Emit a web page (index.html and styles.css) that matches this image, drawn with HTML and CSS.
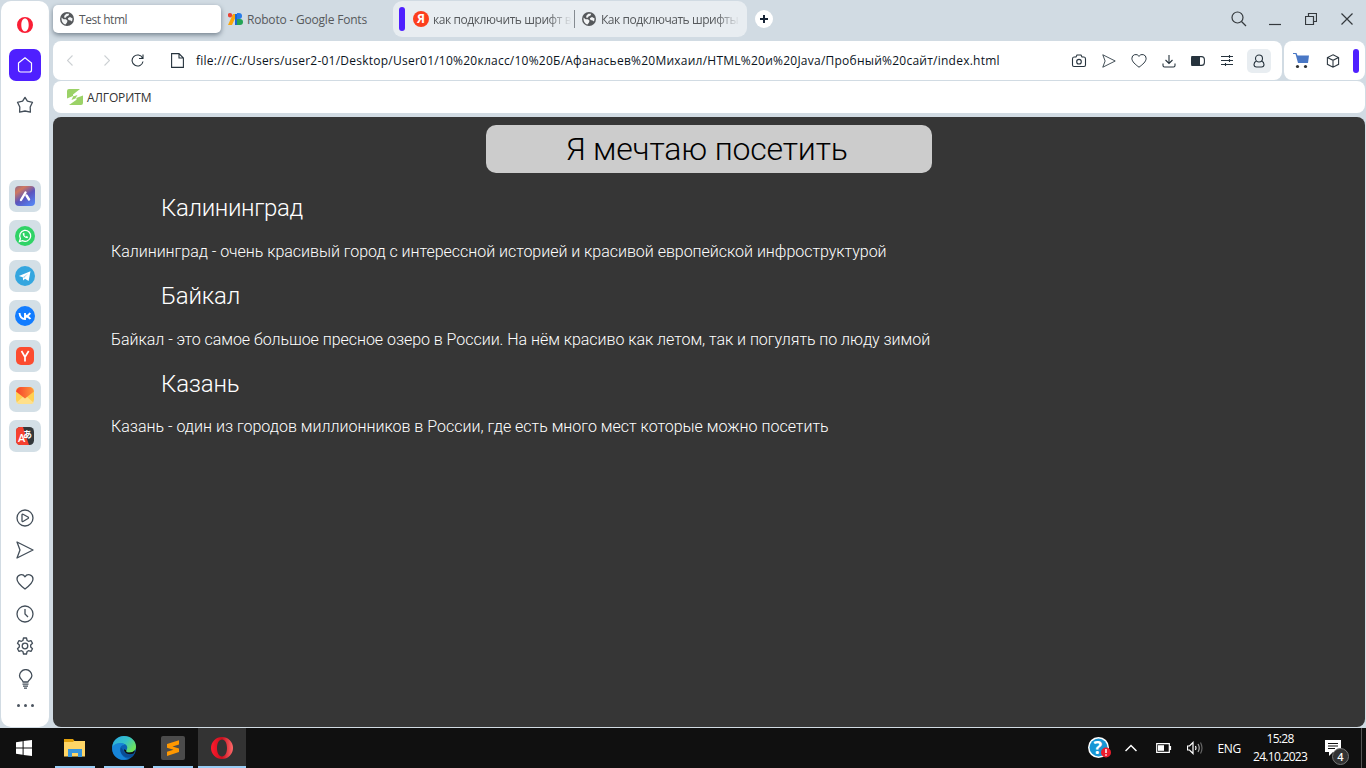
FILE: index.html
```html
<!DOCTYPE html>
<html lang="ru">
<head>
<meta charset="utf-8">
<title>Test html</title>
<link rel="stylesheet" href="styles.css">
</head>
<body>
<svg class="defs" width="0" height="0">
  <defs>
    <linearGradient id="aria" x1="0" y1="0" x2=".7" y2="1"><stop offset="0" stop-color="#8a6a8c"/><stop offset=".25" stop-color="#d0785f"/><stop offset=".6" stop-color="#5b55bd"/><stop offset="1" stop-color="#5580ee"/></linearGradient>
    <linearGradient id="edge" x1="0" y1="0" x2="1" y2=".6"><stop offset="0" stop-color="#2aa8e0"/><stop offset=".55" stop-color="#35c1c9"/><stop offset="1" stop-color="#6fe35a"/></linearGradient>
    <linearGradient id="opera" x1="0" y1="0" x2="1" y2="0"><stop offset="0" stop-color="#ff1b2d"/><stop offset=".5" stop-color="#c90f1e"/><stop offset="1" stop-color="#ff6a6a"/></linearGradient>
    <linearGradient id="mail" x1="0" y1="0" x2="1" y2="0"><stop offset="0" stop-color="#f6402b"/><stop offset="1" stop-color="#ff9a3c"/></linearGradient>
    <symbol id="globe" viewBox="0 0 14 14"><circle cx="7" cy="7" r="7" fill="#55585b"/><path d="M1.600 5.500 3.500 7.200 6 7.200 7.500 8.700 7 10.500 5.500 12.500C3 12 1.200 9.500 1.600 5.500zM6.300 1.800 9.200 1.800 8.500 3.600 6.500 4.500 5.800 5.800 4 5.500 4.500 3.500zM7.800 6.300 10 5 12.600 6.500 12 9.500 10.500 8.600 8.500 8z" fill="#f3f5f6"/></symbol>
    <symbol id="heart" viewBox="0 0 18 18"><path d="M9 16C5 13 1 9.800 1 6a4.300 4.300 0 0 1 8-2.200A4.300 4.300 0 0 1 17 6c0 3.800-4 7-8 10z"/></symbol>
    <symbol id="send" viewBox="0 0 18 18"><path d="M1 1 17 9 1 17 4 9z"/></symbol>
  </defs>
</svg>
<div class="browser">
  <nav class="sidebar">
    <svg class="opera-logo" width="16" height="18" viewBox="0 0 16 18"><path fill="#fa1e35" fill-rule="evenodd" d="M8 1a8 8 0 1 1 0 16A8 8 0 1 1 8 1zm0 1.600c-2.200 0-3.700 2.700-3.700 6.400s1.500 6.400 3.700 6.400 3.700-2.700 3.700-6.400S10.200 2.600 8 2.600z"/></svg>
    <div class="home"><svg width="16" height="18" viewBox="0 0 16 18"><path d="M1.500 7 8 1.700 14.500 7v7a2 2 0 0 1-2 2h-9a2 2 0 0 1-2-2z" fill="none" stroke="#fff" stroke-width="1.200"/></svg></div>
    <svg class="line star" width="18" height="18" viewBox="0 0 18 18"><path d="M9 1.400 11.400 5.200 16.500 6.300 14.200 11 14.400 16.200 9 15 3.600 16.200 3.800 11 1.500 6.300 6.600 5.200z"/></svg>
    <div class="apps">
      <div class="app"><svg width="20" height="20" viewBox="0 0 20 20"><rect width="20" height="20" rx="4" fill="url(#aria)"/><path d="M6 14 10.500 6.500M11.500 9.500 14 13.500" stroke="#fff" stroke-width="2.400" stroke-linecap="round"/></svg></div>
      <div class="app"><svg width="20" height="20" viewBox="0 0 20 20"><circle cx="10" cy="10" r="10" fill="#2fd366"/><path d="M4.500 15.500 5.400 12.500A5.500 5.500 0 1 1 7.500 14.600z" fill="none" stroke="#fff" stroke-width="1.300"/><path d="M7.600 7.500c.2 2.500 2 4.500 4.700 4.800l1-1.300-1.700-.9-.8.700-1.700-1.700.7-.8-.7-1.500z" fill="#fff"/></svg></div>
      <div class="app"><svg width="20" height="20" viewBox="0 0 20 20"><circle cx="10" cy="10" r="10" fill="#34a6df"/><path d="M3.800 10 15.500 5.200 13.600 15 10 12.700 8.200 14.500 7.800 11.300z" fill="#fff"/><path d="M8 11.300 13 7.500 9 12z" fill="#9cd1ee"/></svg></div>
      <div class="app"><svg width="20" height="20" viewBox="0 0 20 20"><circle cx="10" cy="10" r="10" fill="#117cff"/><path d="M4.500 7c.4 4 2.500 6 5.500 6V7M15.200 7Q13.500 10 10.500 10q3 .5 5 3" fill="none" stroke="#fff" stroke-width="1.900"/></svg></div>
      <div class="app"><svg width="18" height="18" viewBox="0 0 18 18"><rect width="18" height="18" rx="5" fill="#fc4c2f"/><path d="M5.500 4 9 10V14.500M12.700 4 9 10" fill="none" stroke="#fff" stroke-width="1.700"/></svg></div>
      <div class="app"><svg width="18" height="18" viewBox="0 0 18 18"><rect width="18" height="17" rx="4.500" fill="#ffd052"/><path d="M0 16 8 9h2l8 7Q16 17 14 17H4Q1 17 0 15z" fill="#ffe08a"/><path d="M0 4.500Q1 0 5 0h8q4 0 5 4.500L9 11.500z" fill="url(#mail)"/></svg></div>
      <div class="app"><svg width="18" height="18" viewBox="0 0 18 18"><rect width="18" height="18" rx="4.500" fill="#33383b"/><path d="M4.500 0H7L13 18H4.500Q0 18 0 13.500v-9Q0 0 4.500 0z" fill="#f6412f"/><text x="2" y="15" class="tr-a">A</text><text x="7" y="11" class="tr-j">あ</text></svg></div>
    </div>
    <div class="tools line">
      <svg width="18" height="18" viewBox="0 0 18 18"><circle cx="9" cy="9" r="8"/><path d="M6 6q0-1 1-.7l5 2.700q1 .8 0 1.500L7 12.500q-1 .3-1-.7z"/></svg>
      <svg width="18" height="18"><use href="#send"/></svg>
      <svg width="18" height="18"><use href="#heart"/></svg>
      <svg width="18" height="18" viewBox="0 0 18 18"><circle cx="9" cy="9" r="8"/><path d="M9 4v5l3 3"/></svg>
      <svg width="18" height="18" viewBox="0 0 18 18"><path d="M7.500 1h3l.6 2.500 1.400.8 2.500-.7 1.500 2.600L14.700 8v2l1.800 1.800-1.500 2.600-2.500-.7-1.400.8-.6 2.500h-3l-.6-2.500-1.400-.8-2.500.7-1.500-2.600L3.300 10V8L1.500 6.200 3 3.600l2.500.7 1.400-.8z"/><circle cx="9" cy="9" r="2.800"/></svg>
      <svg width="18" height="20" viewBox="0 0 18 20"><path d="M7 13C7 11 3.500 10 3.500 6.800a6.200 6.200 0 0 1 12.400 0C15.900 10 12 11 12 13zM6.500 15.200h6M7 17.200h5M8 19.200h3"/></svg>
    </div>
    <div class="dots"><i></i><i></i><i></i></div>
  </nav>
  <div class="window">
    <header class="tabs">
      <div class="tab active"><svg width="14" height="14"><use href="#globe"/></svg><span class="t1">Test html</span></div>
      <div class="tab google"><svg width="15" height="12" viewBox="0 0 15 12"><path d="M5 1h4L4 12H0z" fill="#fba60a"/><circle cx="2" cy="2.200" r="2.200" fill="#ea4335"/><path d="M7 1h2.500v11H7z" fill="#1967d2"/><path d="M9 0h2a3 3 0 0 1 0 6H9z" fill="#287be8"/><path d="M9 6h3a3 3 0 0 1 0 6H9z" fill="#23a455"/></svg><span class="t2">Roboto - Google Fonts</span></div>
      <div class="island">
        <i class="purple"></i>
        <div class="ya">Я</div><span class="fade t3">как подключить шрифт в</span>
        <i class="split"></i>
        <svg width="14" height="14"><use href="#globe"/></svg><span class="fade t4">Как подключать шрифты</span>
      </div>
      <div class="plus"><svg width="8" height="8" viewBox="0 0 8 8"><path d="M4 0v8M0 4h8" stroke="#172436" stroke-width="2"/></svg></div>
      <div class="controls">
        <svg width="16" height="16" viewBox="0 0 16 16"><circle cx="6.500" cy="6.500" r="5.500"/><path d="m10.500 10.500 4.500 4.500"/></svg>
        <svg width="12" height="16" viewBox="0 0 12 16"><path d="M0 13.500h12"/></svg>
        <svg width="12" height="12" viewBox="0 0 12 12"><path d="M.5 3.500h8v8h-8zM3.500 3.500v-3h8v8h-3"/></svg>
        <svg width="12" height="12" viewBox="0 0 12 12"><path d="m.5.500 11 11m0-11-11 11"/></svg>
      </div>
    </header>
    <div class="bars">
      <div class="address">
        <svg class="pale" width="6" height="11" viewBox="0 0 6 11"><path d="M5.500.500.500 5.500l5 5"/></svg>
        <svg class="pale fwd" width="6" height="11" viewBox="0 0 6 11"><path d="m.5.500 5 5-5 5"/></svg>
        <svg class="reload" width="13" height="13" viewBox="0 0 13 13"><path d="M11.500 4A5.500 5.500 0 1 0 12 7.500M12 .500V4.500H8"/></svg>
        <svg class="file" width="13" height="15" viewBox="0 0 13 15"><path d="M.6.600h7.400l4.400 4.400v9.400H.6zM8 .600V5h4.400"/></svg>
        <span class="url">file:///C:/Users/user2-01/Desktop/User01/10%20класс/10%20Б/Афанасьев%20Михаил/HTML%20и%20Java/Пробный%20сайт/index.html</span>
        <div class="actions">
          <svg width="16" height="16" viewBox="0 0 16 16"><path d="M3 4h2l1-2h4l1 2h2q1.500 0 1.500 2v6q0 1.500-1.500 1.500H3q-1.500 0-1.500-1.500V6q0-2 1.500-2z"/><circle cx="8" cy="8.700" r="2.300"/></svg>
          <svg width="14" height="14"><use href="#send"/></svg>
          <svg width="16" height="16"><use href="#heart"/></svg>
          <svg width="14" height="14" viewBox="0 0 14 14"><path d="M7 1v8M3.500 6 7 9.500 10.500 6M1 9.500v2q0 1.500 1.500 1.500h9q1.500 0 1.500-1.500v-2"/></svg>
          <svg width="14" height="12" viewBox="0 0 14 12"><path d="M1 1.600h9.500q2.900 0 2.900 3v2.800q0 3-2.900 3H1z"/><path class="solid" d="M2 1h7v10H2Q0 11 0 9V3Q0 1 2 1z"/></svg>
          <svg width="14" height="14" viewBox="0 0 14 14"><path d="M1 2.500h12M1 6.500h12M1 10.500h12M9.500 1v3M9.500 5v3M5.500 9v3"/></svg>
          <div class="user"><svg width="12" height="14" viewBox="0 0 12 14"><circle cx="6" cy="4.500" r="3.500"/><path d="M3.500 7Q1 8 1 10.500 1 13 3.500 13h5Q11 13 11 10.500 11 8 8.500 7"/></svg></div>
        </div>
      </div>
      <div class="extras">
        <svg width="17" height="17" viewBox="0 0 17 17"><path d="M0 1h3.500l1 2.500H16L15 11H5L2.500 2H0z" fill="#4977c5"/><circle cx="4.500" cy="14.500" r="1.600" fill="#303234"/><circle cx="12.500" cy="14.500" r="1.600" fill="#303234"/></svg>
        <svg class="cube" width="14" height="14" viewBox="0 0 14 14"><path d="M7 .800 12.600 3.500v6.800L7 13.200 1.400 10.300V3.500zM1.400 3.500 7 6.300l5.600-2.800M7 6.300v6.900"/></svg>
        <i class="purple"></i>
      </div>
    </div>
    <div class="bookmarks"><svg width="16" height="16" viewBox="0 0 16 16"><path d="M0 2Q0 0 2 0H13L6 5.500V7.500L10.500 6 8.500 9.300 16 6.500V14q0 2-2 2H2L9.500 10.800V9L4.500 11 6.500 6.800 0 9.500z" fill="#9bd267"/></svg><span class="algo">АЛГОРИТМ</span></div>
    <main class="page">
      <h1><span>Я мечтаю посетить</span></h1>
      <h2 class="a">Калининград</h2>
      <p><span class="p1">Калининград - очень красивый город с интерессной историей и красивой европейской инфроструктурой</span></p>
      <h2 class="b">Байкал</h2>
      <p><span class="p2">Байкал - это самое большое пресное озеро в России. На нём красиво как летом, так и погулять по люду зимой</span></p>
      <h2 class="c">Казань</h2>
      <p class="last"><span class="p3">Казань - один из городов миллионников в России, где есть много мест которые можно посетить</span></p>
    </main>
  </div>
</div>
<footer class="taskbar">
  <div class="start"><svg width="16" height="16" viewBox="0 0 16 16"><path d="M0 2.300 6.600 1.300v6.200H0zM7.600 1.100 16 0v7.500H7.600zM0 8.500h6.600v6.200L0 13.700zM7.600 8.500H16V16l-8.400-1.100z" fill="#fff"/></svg></div>
  <div class="task"><svg width="22" height="18" viewBox="0 0 22 18"><path d="M0 0h9l1.500 2H21v5H0z" fill="#e2a10c"/><path d="M0 3h9l1-1h11v15.500H0z" fill="#ffd666"/><path d="M4 10h14v8h-4v-4H8v4H4z" fill="#3896dc"/></svg></div>
  <div class="task"><svg width="24" height="24" viewBox="0 0 24 24"><circle cx="12" cy="12" r="12" fill="#0c62b3"/><path d="M.3 11C1 4 6 0 12 0c7 0 12 5 12 10.500 0 4-3 6-6.500 6-4 0-4-1.600-3-2.600 2-2.500 0-6.400-4-6.400-4.500 0-8 2-10.200 3.500z" fill="url(#edge)"/><path d="M.2 11C3 6.500 10 6 13 9c-4-.5-6 3-4.500 7 1.500 4 5 7 8.500 7C7 26-.5 20 .2 11z" fill="#1785d8"/><path d="M9 11.500c-2 5 2.500 10 7.500 10 2.500 0 4.700-1.500 6-4-5 2.500-10 .5-11.500-3.500z" fill="#0a4d95"/><path d="M14.300 14.200q-.8 2.300 3.200 2.300 3 0 5.500-2.200-.3 1.700-1 3-4 2-8 0-2.500-1.800-2-4z" fill="#101010"/></svg></div>
  <div class="task"><svg width="24" height="24" viewBox="0 0 24 24"><rect width="24" height="24" rx="2" fill="#4b4b4b"/><path d="M6 8 18 4.200v4.300l-6.500 2L18 12.500V16L6 20v-4.300l6.500-2L6 11.700z" fill="#ff9800"/></svg></div>
  <div class="task current"><svg width="24" height="24" viewBox="0 0 24 24"><path fill="url(#opera)" fill-rule="evenodd" d="M12 1a11 11 0 1 1 0 22 11 11 0 1 1 0-22zm0 2.500C8.800 3.500 7 7.200 7 12s1.800 8.500 5 8.500 5-3.700 5-8.500-1.800-8.500-5-8.500z"/></svg></div>
  <div class="tray">
    <svg class="help" width="24" height="22" viewBox="0 0 24 22"><circle cx="10.500" cy="10.500" r="10.500" fill="#fff"/><circle cx="10.500" cy="10.500" r="9" fill="#1696d5"/><text x="5.500" y="17" class="q">?</text><circle cx="18" cy="15.500" r="5" fill="#ec1c2c"/><path d="M18 12v4M18 17.300v1.500" stroke="#fff" stroke-width="1.500"/></svg>
    <svg class="up" width="12" height="8" viewBox="0 0 12 8"><path d="m.5 7 5.500-5.500L11.500 7"/></svg>
    <svg class="battery" width="16" height="10" viewBox="0 0 16 10"><path d="M.7.700h12.600v8.600H.7zM14.500 3v4"/><path class="fill" d="M2 2.200h6v5.600H2z"/></svg>
    <svg class="sound" width="17" height="14" viewBox="0 0 17 14"><path d="M.5 5h2L6 1.500v11L2.500 9h-2z"/><path d="M8.500 5q1 2 0 4"/><path class="mid" d="M11 3q2.500 4 0 8"/><path class="dim" d="M13.500 1.500q3 5.500 0 11"/></svg>
    <span class="lang">ENG</span>
    <div class="clock"><span>15:28</span><span class="date">24.10.2023</span></div>
    <div class="notice"><svg width="16" height="17" viewBox="0 0 16 17"><path d="M0 0h16v12H8l-4 4v-4H0z" fill="#fff"/><path d="M3 3.500h10M3 6h10M3 8.500h7" stroke="#111"/></svg><b>4</b></div>
    <i class="desktop"></i>
  </div>
</footer>
</body>
</html>
```
FILE: styles.css
```css
* { box-sizing: border-box; }
body { margin: 0; width: 1366px; height: 768px; overflow: hidden; background: #d1dbe3; font-family: "Open Sans", "Noto Sans", sans-serif; font-size: 12px; }
.defs { position: absolute; }
svg { display: block; flex: none; }
i { display: block; flex: none; }
span { white-space: nowrap; }
.browser { display: flex; height: 728px; padding: 1px; }
.sidebar { width: 48px; height: 726px; background: #fff; border-radius: 10px; display: flex; flex-direction: column; align-items: center; flex: none; }
.opera-logo { margin-top: 15px; }
.home { margin-top: 15px; width: 32px; height: 32px; border-radius: 7px; background: #4f20ff; display: flex; align-items: center; justify-content: center; }
.star { margin-top: 15px; }
.line { fill: none; stroke: #434e59; stroke-width: 1.3; stroke-linejoin: round; }
.apps { margin-top: 65px; display: grid; gap: 8px; padding-top: 1px; }
.app { width: 32px; height: 32px; border-radius: 7px; background: #d3dfe6; display: flex; align-items: center; justify-content: center; }
.tr-a { font: 600 11px "Open Sans", sans-serif; fill: #fff; stroke: none; }
.tr-j { font: 700 9px "Noto Sans CJK JP", sans-serif; fill: #fff; }
.tools { margin-top: 57px; display: grid; gap: 14px; }
.dots { display: flex; gap: 4px; margin-top: 15px; }
.dots i { width: 3px; height: 3px; border-radius: 2px; background: #4c5560; }
.window { width: 1312px; margin-left: 4px; flex: none; }
.tabs { height: 40px; display: flex; align-items: flex-start; color: #56595c; }
.tab { display: flex; align-items: center; height: 28px; margin-top: 4px; }
.active { width: 168px; padding-left: 7px; gap: 5px; background: #fff; border-radius: 5px; box-shadow: 0 2px 5px #75828e; }
.t1 { letter-spacing: -.45px; }
.t2 { letter-spacing: -.2px; }
.google { width: 172px; padding-left: 7px; gap: 4px; }
.island { width: 354px; height: 36px; background: #e8edf1; border-radius: 9px; display: flex; align-items: center; padding-left: 6px; }
.purple { width: 6px; height: 24px; border-radius: 3px; background: #4f20ff; }
.ya { width: 16px; height: 16px; margin: 0 4px 0 8px; border-radius: 8px; background: #fc3f1d; color: #fff; font-size: 12px; font-weight: 700; line-height: 16px; text-align: center; flex: none; }
.fade { width: 140px; flex: none; overflow: hidden; -webkit-mask-image: linear-gradient(to right, #000 114px, transparent 139px); }
.t3 { letter-spacing: -.42px; }
.t4 { margin-left: 5px; letter-spacing: -.45px; }
.split { width: 1px; height: 18px; background: #858b91; margin: 0 7px 0 1px; }
.plus { width: 18px; height: 18px; border-radius: 9px; background: #fff; margin: 9px 0 0 8px; display: flex; align-items: center; justify-content: center; }
.controls { margin: 10px 12px 0 auto; display: flex; gap: 24px; align-items: center; fill: none; stroke: #34393d; stroke-width: 1.2; }
.controls svg:first-child { margin-right: -2px; }
.bars { display: flex; gap: 2px; height: 39px; }
.address { width: 1229px; background: #fff; border-radius: 8px; display: flex; align-items: center; padding-left: 14px; fill: none; stroke: #26333d; stroke-width: 1.1; }
.address .pale { stroke: #ccd0d3; }
.address .fwd { margin-left: 31px; }
.reload { margin-left: 21px; }
.file { margin-left: 27px; }
.url { margin-left: 12px; color: #0b141d; letter-spacing: .24px; }
.actions { margin-left: auto; margin-right: 11px; display: flex; gap: 15px; align-items: center; }
.solid { fill: #26333d; stroke: none; }
.user { width: 24px; height: 24px; border-radius: 5px; background: #e8edf1; display: flex; align-items: center; justify-content: center; margin-left: -2px; }
.extras { width: 81px; background: #fff; border-radius: 8px; display: flex; align-items: center; padding-left: 9px; }
.cube { margin-left: 16px; fill: none; stroke: #303a43; stroke-width: 1.1; }
.extras .purple { margin-left: 13px; }
.bookmarks { margin-top: 1px; height: 32px; border-radius: 8px; background: #fff; display: flex; align-items: center; padding-left: 14px; gap: 4px; color: #333; }
.algo { letter-spacing: -.12px; }
.page { margin-top: 4px; height: 610px; border-radius: 8px; background: #363636; padding-top: 8px; color: #fff; font-family: Roboto, sans-serif; font-weight: 300; }
.page h1 { margin: 0 0 21px 433px; width: 446px; height: 48px; line-height: 49px; border-radius: 10px; background: #ccc; color: #000; font-size: 32px; font-weight: 300; padding-left: 80px; letter-spacing: -.18px; }
.page h2 { margin: 0 0 20px 108px; height: 28px; line-height: 28px; font-size: 24px; font-weight: 300; letter-spacing: -.2px; }
.page h2.a { letter-spacing: -.36px; }
.page p { margin: 0 0 21px 58px; height: 19px; line-height: 19px; font-size: 16px; }
.page h2.c { margin-bottom: 19px; }
.p1 { letter-spacing: -.03px; }
.p2 { letter-spacing: -.037px; }
.taskbar { height: 40px; background: #101010; display: flex; }
.start { width: 48px; display: flex; align-items: center; justify-content: center; }
.task { width: 40px; margin: 0 4px 0 5px; display: flex; align-items: center; justify-content: center; border-bottom: 2px solid #99cdf5; padding-top: 2px; }
.task:nth-child(2) { margin-left: 7px; }
.current { width: 48px; margin-left: 1px; background: #333; }
.tray { margin-left: auto; display: flex; align-items: center; color: #fff; fill: none; stroke: #fff; stroke-width: 1.2; }
.help { stroke: none; }
.q { font: 700 18px "Open Sans", sans-serif; fill: #fff; }
.up { margin-left: 13px; stroke-width: 1.5; }
.battery { margin-left: 19px; }
.fill { fill: #fff; stroke: none; }
.sound { margin-left: 15px; }
.mid { stroke: #aaa; }
.dim { stroke: #666; }
.lang { margin-left: 13px; letter-spacing: -.3px; }
.clock { margin-left: 12px; width: 54px; text-align: center; line-height: 18px; display: grid; letter-spacing: -.7px; }
.notice { position: relative; margin-left: 18px; width: 26px; height: 17px; stroke: none; }
.notice b { position: absolute; left: 7px; top: 8px; width: 17px; height: 17px; border: 1px solid #777; border-radius: 9px; background: #333; font-size: 11px; line-height: 15px; font-weight: 600; text-align: center; }
.desktop { width: 1px; height: 40px; background: #555; margin: 0 4px 0 10px; }
```
